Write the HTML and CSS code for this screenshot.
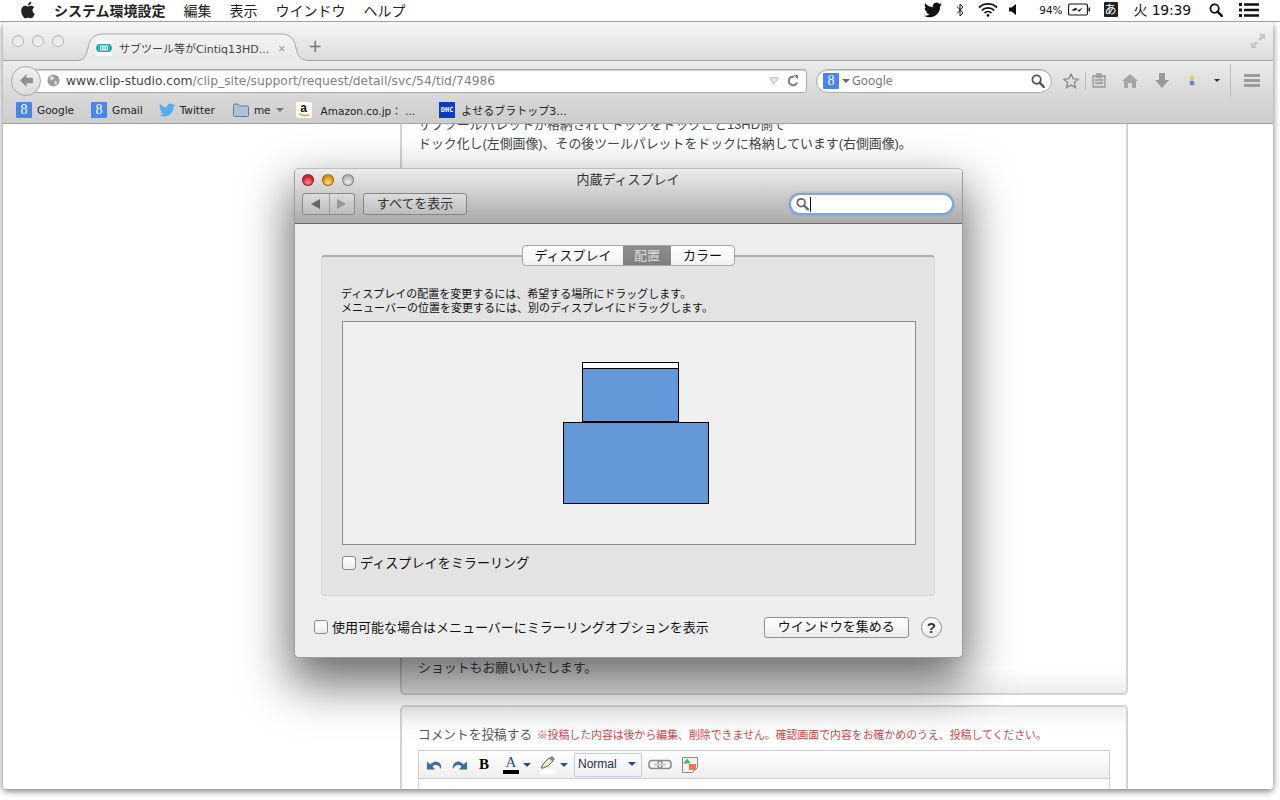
FILE: index.html
```html
<!DOCTYPE html>
<html lang="ja">
<head>
<meta charset="utf-8">
<title>システム環境設定</title>
<link rel="stylesheet" href="styles.css">
</head>
<body>
<svg class="sprite" aria-hidden="true">
  <symbol id="bird" viewBox="0 0 24 24"><path d="M23.953 4.57a10 10 0 01-2.825.775 4.958 4.958 0 002.163-2.723c-.951.555-2.005.959-3.127 1.184a4.92 4.92 0 00-8.384 4.482C7.69 8.095 4.067 6.13 1.64 3.162a4.822 4.822 0 00-.666 2.475c0 1.71.87 3.213 2.188 4.096a4.904 4.904 0 01-2.228-.616v.06a4.923 4.923 0 003.946 4.827 4.996 4.996 0 01-2.212.085 4.936 4.936 0 004.604 3.417 9.867 9.867 0 01-6.102 2.105c-.39 0-.779-.023-1.17-.067a13.995 13.995 0 007.557 2.209c9.053 0 13.998-7.496 13.998-13.985 0-.21 0-.42-.015-.63A9.935 9.935 0 0024 4.59z"/></symbol>
  <symbol id="lens" viewBox="0 0 14 14"><circle cx="5.6" cy="5.6" r="4.2" fill="none" stroke="currentColor" stroke-width="1.8"/><path d="M8.6 8.6l4.2 4.2" stroke="currentColor" stroke-width="2.4" stroke-linecap="round"/></symbol>
  <linearGradient id="tabfill" x1="0" y1="0" x2="0" y2="1"><stop offset="0" stop-color="#f4f4f4"/><stop offset="1" stop-color="#e8e8e8"/></linearGradient>
</svg>

<header class="menubar">
  <svg class="apple" viewBox="0 0 24 24"><path d="M18.71 19.5c-.83 1.24-1.71 2.45-3.05 2.47-1.34.03-1.77-.79-3.29-.79-1.53 0-2 .77-3.27.82-1.31.05-2.3-1.32-3.14-2.53C4.25 17 2.94 12.45 4.7 9.39c.87-1.52 2.43-2.48 4.12-2.51 1.28-.02 2.5.87 3.29.87.78 0 2.26-1.07 3.81-.91.65.03 2.47.26 3.64 1.98-.09.06-2.17 1.28-2.15 3.81.03 3.02 2.65 4.03 2.68 4.04-.03.07-.42 1.44-1.38 2.83M13 3.5c.73-.83 1.94-1.46 2.94-1.5.13 1.17-.34 2.35-1.04 3.19-.69.85-1.83 1.51-2.95 1.42-.15-1.15.41-2.35 1.05-3.11z"/></svg>
  <nav class="menus">
    <span class="menu-app">システム環境設定</span>
    <span>編集</span><span>表示</span><span>ウインドウ</span><span>ヘルプ</span>
  </nav>
  <div class="status">
    <svg class="st-bird"><use href="#bird"/></svg>
    <svg class="st-bt" viewBox="0 0 8 14"><path d="M1 3.5l6 6.5-3 3V1l3 3-6 6.5" fill="none" stroke="#111" stroke-width="1"/></svg>
    <svg class="st-wifi" viewBox="0 0 20 15"><path d="M1 5.5a13 13 0 0118 0M3.8 8.3a9 9 0 0112.4 0M6.6 11a5 5 0 016.8 0" fill="none" stroke="#111" stroke-width="1.8"/><circle cx="10" cy="13.4" r="1.4" fill="#111"/></svg>
    <svg class="st-vol" viewBox="0 0 7 11"><path d="M0 3.5h2.5L7 0v11L2.5 7.5H0z" fill="#111"/></svg>
    <span class="st-pct">94%</span>
    <svg class="st-bat" viewBox="0 0 22 13"><rect x=".6" y="1" width="18.8" height="11" rx="1.2" fill="none" stroke="#111" stroke-width="1.1"/><path d="M20.5 4.5h1.5v4h-1.5z" fill="#111"/><path d="M4 7l4-2.5 1.5 3L15 4.5l-4 4.5-1.5-2.6L5 8z" fill="#111"/></svg>
    <span class="st-ime">あ</span>
    <span class="st-clock">火 19:39</span>
    <svg class="st-lens"><use href="#lens"/></svg>
    <svg class="st-list" viewBox="0 0 20 14"><path d="M0 0h3v3H0zM0 5.5h3v3H0zM0 11h3v3H0zM5 .2h15v2.6H5zM5 5.7h15v2.6H5zM5 11.2h15v2.6H5z" fill="#111"/></svg>
  </div>
</header>

<main class="browser">
  <div class="tabstrip">
    <div class="lights gray-lights"><i></i><i></i><i></i></div>
    <div class="tab">
      <svg class="tab-shape" viewBox="0 0 234 28" preserveAspectRatio="none"><path d="M0 27.5C8 27.5 10 24 12 15 14 5 18 1 28 1H204C214 1 218 5 220 15 222 24 225 27.5 234 27.5V28H0z" fill="url(#tabfill)"/><path d="M0 27.5C8 27.5 10 24 12 15 14 5 18 1 28 1H204C214 1 218 5 220 15 222 24 225 27.5 234 27.5" fill="none" stroke="#a6a6a6"/></svg>
      <svg class="favicon" viewBox="0 0 16 16"><rect width="16" height="16" fill="#fff"/><rect x="0" y="4" width="16" height="8" rx="4" fill="#2aa8bf"/><rect x="4" y="5.5" width="8" height="5" fill="#e8f8fb"/><path d="M5.5 6.5v3M8 6.5v3M10.5 6.5v3" stroke="#2aa8bf" stroke-width="1"/></svg>
      <span class="tab-title">サブツール等がCintiq13HD...</span>
      <span class="tab-close">✕</span>
    </div>
    <span class="tab-new">+</span>
    <svg class="fullscreen" viewBox="0 0 14 14"><path d="M14 0v6l-2-2-3 3-2-2 3-3-2-2zM0 14V8l2 2 3-3 2 2-3 3 2 2z" fill="#c6c6c6"/></svg>
  </div>

  <div class="navbar">
    <div class="back"><svg viewBox="0 0 14 14"><path d="M1 7l6-6v3.500h6v5H7V13z" fill="#8f8f8f"/></svg></div>
    <div class="urlbar">
      <svg class="globe" viewBox="0 0 14 14"><circle cx="7" cy="7" r="6.5" fill="#9c9c9c"/><path d="M4 2l3 1 1 2-3 2-2-1zM8 7l3 1-1 4-2-1z" fill="#dcdcdc"/></svg>
      <span class="url"><b>www.clip-studio.com</b>/clip_site/support/request/detail/svc/54/tid/74986</span>
      <svg class="url-drop" viewBox="0 0 10 8"><path d="M.7.7h8.6L5 7.3z" fill="#e8e8e8" stroke="#b9b9b9"/></svg>
      <svg class="url-reload" viewBox="0 0 12 12"><path d="M10 7.5A4.2 4.2 0 116 1.8h1" fill="none" stroke="#7d7d7d" stroke-width="2"/><path d="M6.5 0L11 0v4.6z" fill="#7d7d7d"/></svg>
    </div>
    <div class="searchbar">
      <span class="g-icon">8</span>
      <i class="caret caret-dark"></i>
      <span class="search-label">Google</span>
      <svg class="search-lens"><use href="#lens"/></svg>
    </div>
    <svg class="tool star" viewBox="0 0 16 16"><path d="M8 1l2.1 4.6 5 .6-3.7 3.4 1 5L8 12.1 3.600 14.600l1-5L.9 6.200l5-.6z" fill="#dedede" stroke="#8c8c8c" stroke-width="1.3"/></svg>
    <i class="sep"></i>
    <svg class="tool clip" viewBox="0 0 14 15"><path d="M1 3h12v11H1z" fill="#d6d6d6" stroke="#979797" stroke-width="1.3"/><path d="M5 1h4v3H5zM3 7h8M3 10h8" fill="none" stroke="#979797" stroke-width="1.3"/></svg>
    <svg class="tool home" viewBox="0 0 16 14"><path d="M8 0l8 7h-2v7h-4V9H6v5H2V7H0z" fill="#a6a6a6"/></svg>
    <svg class="tool down" viewBox="0 0 14 15"><path d="M4 0h6v7h4l-7 8-7-8h4z" fill="#9a9a9a"/></svg>
    <svg class="tool dots" viewBox="0 0 6 11"><circle cx="3" cy="2.800" r="2.500" fill="#d8d470"/><circle cx="3" cy="8" r="2.500" fill="#7a80c8"/></svg>
    <i class="caret caret-small"></i>
    <i class="sep sep-tall"></i>
    <svg class="tool burger" viewBox="0 0 16 13"><path d="M0 0h16v3H0zM0 5h16v3H0zM0 10h16v3H0z" fill="#9c9c9c"/></svg>
  </div>

  <div class="bookmarks">
    <span class="bm bm-google"><span class="g-icon">8</span>Google</span>
    <span class="bm bm-gmail"><span class="g-icon">8</span>Gmail</span>
    <span class="bm bm-twitter"><svg class="bm-bird"><use href="#bird"/></svg>Twitter</span>
    <span class="bm bm-me"><svg class="folder" viewBox="0 0 16 14"><path d="M.5 2.500q0-1.500 1.500-1.500h3l1.500 2h8q1 0 1 1v8.500q0 1-1 1h-13q-1 0-1-1z" fill="#a9c3d8" stroke="#5f7f98"/></svg>me<i class="caret caret-me"></i></span>
    <span class="bm bm-amazon"><span class="amazon"><span>a</span><svg viewBox="0 0 12 4"><path d="M1 .5q5 4 10 .8" fill="none" stroke="#f09a1f" stroke-width="1.400"/></svg></span>Amazon.co.jp： ...</span>
    <span class="bm bm-dhc"><span class="dhc">DHC</span>よせるブラトップ3...</span>
  </div>

  <div class="page">
    <section class="card card-main">
      <div>
        <p>サブツールパレットが格納されてドックをドックごと13HD側で</p>
        <p>ドック化し(左側画像)、その後ツールパレットをドックに格納しています(右側画像)。</p>
      </div>
      <p>ショットもお願いいたします。</p>
    </section>
    <section class="card card-comment">
      <p class="comment-head">コメントを投稿する <span class="note">※投稿した内容は後から編集、削除できません。確認画面で内容をお確かめのうえ、投稿してください。</span></p>
      <div class="editor">
        <div class="toolbar">
          <svg class="ed-ic undo" viewBox="0 0 15 11"><path d="M3.500 5.500Q7 1 11 3t3 7q-2-4-5-4.300-2-.2-3.500 1.800L8 10.500H0V2.500z" fill="#3f6aa3"/></svg>
          <svg class="ed-ic redo" viewBox="0 0 15 11"><path d="M11.500 5.500Q8 1 4 3t-3 7q2-4 5-4.300 2-.2 3.500 1.800L7 10.500h8V2.500z" fill="#3f6aa3"/></svg>
          <b class="ed-bold">B</b>
          <span class="ed-color"><span class="ed-a">A</span><i class="bar bar-black"></i></span>
          <i class="caret caret-blue"></i>
          <span class="ed-hl"><svg viewBox="0 0 16 13"><path d="M1 12l3-5 5-5 4 3-5 5-5 2z" fill="#f7edb0" stroke="#4c5f83"/><path d="M9 2l3-2 3 3-2 2z" fill="#7e8796"/></svg><i class="bar bar-white"></i></span>
          <i class="caret caret-blue"></i>
          <span class="ed-select">Normal<i class="caret caret-blue"></i></span>
          <svg class="ed-link" viewBox="0 0 24 11"><rect x="1" y="1.500" width="13" height="8" rx="3" fill="none" stroke="#8a8a8a" stroke-width="1.500"/><rect x="10" y="1.500" width="13" height="8" rx="3" fill="none" stroke="#8a8a8a" stroke-width="1.500"/><path d="M6 5.500h12" stroke="#c9c9c9" stroke-width="2"/></svg>
          <svg class="ed-img" viewBox="0 0 16 16"><path d="M.5.500h15v10l-5 5h-10z" fill="#f3f3f3" stroke="#8a8a8a"/><path d="M5 1.500l4 5H1z" fill="#58b55a"/><rect x="7" y="7" width="7" height="6" fill="#f0794c"/></svg>
        </div>
      </div>
    </section>
  </div>
</main>

<section class="prefs">
  <div class="prefs-head">
    <div class="head-top">
      <div class="lights color-lights"><i class="l-red"></i><i class="l-yellow"></i><i class="l-gray"></i></div>
      <h1>内蔵ディスプレイ</h1>
    </div>
    <div class="head-tools">
      <div class="seg"><svg viewBox="0 0 9 10"><path d="M9 0v10L0 5z" fill="#666"/></svg><svg viewBox="0 0 9 10"><path d="M0 0v10l9-5z" fill="#999"/></svg></div>
      <button class="show-all">すべてを表示</button>
      <div class="prefs-search"><svg class="prefs-lens"><use href="#lens"/></svg><i class="text-caret"></i></div>
    </div>
  </div>
  <div class="prefs-body">
    <div class="group">
      <div class="tabs"><span>ディスプレイ</span><span class="tab-on">配置</span><span>カラー</span></div>
      <p class="desc">ディスプレイの配置を変更するには、希望する場所にドラッグします。<br>メニューバーの位置を変更するには、別のディスプレイにドラッグします。</p>
      <div class="arrange">
        <div class="disp disp-top"><i class="disp-menu"></i></div>
        <div class="disp disp-main"></div>
      </div>
      <label class="check check-mirror"><i class="box"></i>ディスプレイをミラーリング</label>
    </div>
    <div class="prefs-foot">
      <label class="check"><i class="box"></i>使用可能な場合はメニューバーにミラーリングオプションを表示</label>
      <button class="gather">ウインドウを集める</button>
      <span class="help">?</span>
    </div>
  </div>
</section>
</body>
</html>
```
FILE: styles.css
```css
* { box-sizing: border-box; }
html, body { margin: 0; height: 100%; }
body {
  position: relative;
  width: 1280px;
  height: 800px;
  overflow: hidden;
  background: #fff;
  font-family: "Noto Sans CJK JP", "Noto Sans", sans-serif;
  color: #111;
}
p, h1 { margin: 0; font-weight: normal; }
i { display: block; font-style: normal; }
.sprite { position: absolute; width: 0; height: 0; }

/* menu bar */
.menubar {
  position: relative;
  z-index: 1;
  display: flex;
  align-items: center;
  height: 22px;
  padding: 0 0 2px 18px;
  background: #fff;
  border-bottom: 1px solid #a0a0a0;
  font-size: 14px;
  line-height: 20px;
}
.apple { width: 20px; height: 20px; fill: #222; }
.menus { display: flex; gap: 18px; margin-left: 16px; color: #222; }
.menu-app { font-weight: 700; }
.status { display: flex; align-items: center; margin-left: auto; padding-right: 21px; }
.st-bird { width: 18px; height: 18px; fill: #111; }
.st-bt { width: 8px; height: 14px; margin-left: 14px; }
.st-wifi { width: 20px; height: 15px; margin-left: 14px; }
.st-vol { width: 7px; height: 11px; margin-left: 11px; }
.st-pct { margin-left: 23px; font-family: "DejaVu Sans", sans-serif; font-size: 10.5px; }
.st-bat { width: 22px; height: 13px; margin-left: 5px; }
.st-ime {
  width: 14px; height: 15px; margin-left: 14px;
  background: #222; color: #fff; border-radius: 1px;
  font-size: 12px; line-height: 14px; text-align: center;
}
.st-clock { margin-left: 16px; font-size: 14px; font-family: "DejaVu Sans", "Noto Sans CJK JP", sans-serif; letter-spacing: -.2px; }
.st-lens { width: 14px; height: 14px; margin-left: 18px; color: #111; }
.st-list { width: 20px; height: 14px; margin-left: 16px; }

/* browser window */
.browser {
  position: absolute;
  left: 3px; top: 22px;
  width: 1270px; height: 767px;
  display: flex; flex-direction: column;
  background: #fff;
  border-radius: 4px;
  overflow: hidden;
  box-shadow: 0 2px 7px rgba(0,0,0,.55);
}
.tabstrip {
  display: flex; align-items: flex-end;
  height: 39px; padding-left: 9px;
  background: linear-gradient(#f6f6f6, #dcdcdc);
  border-bottom: 1px solid #a6a6a6;
  flex: none;
}
.lights { display: flex; gap: 8px; }
.lights i { width: 12px; height: 12px; border-radius: 50%; }
.gray-lights { margin-bottom: 13px; }
.gray-lights i { border: 1px solid #b4b4b4; background: linear-gradient(#e4e4e4, #f4f4f4); }
.tab {
  position: relative;
  display: flex; align-items: center;
  width: 234px; height: 28px;
  margin: 0 0 -1px 12px;
  padding: 2px 0 0 20px;
  color: #444;
}
.tab-shape { position: absolute; left: 0; top: 0; width: 100%; height: 100%; }
.favicon { position: relative; width: 16px; height: 16px; flex: none; }
.tab-title { position: relative; margin-left: 7px; white-space: nowrap; font: 11px "DejaVu Sans", "Noto Sans CJK JP", sans-serif; }
.tab-close { position: relative; margin-left: auto; margin-right: 24px; font-size: 9px; font-weight: 700; color: #aaa; }
.tab-new { margin: 0 0 2px -2px; font: 17px/24px "DejaVu Sans", sans-serif; color: #777; }
.fullscreen { width: 14px; height: 14px; margin: 0 8px 12px auto; }

.navbar {
  display: flex; align-items: center;
  height: 36px; flex: none;
  background: linear-gradient(#ececec, #d7d7d7);
  padding: 3px 0 0 8px;
}
.back {
  position: relative; z-index: 1;
  display: flex; align-items: center; justify-content: center;
  width: 30px; height: 30px;
  border: 1px solid #a8a8a8; border-radius: 50%;
  background: linear-gradient(#f0f0f0, #dcdcdc);
}
.back svg { width: 15px; height: 15px; }
.urlbar {
  display: flex; align-items: center;
  width: 773px; height: 24px;
  margin-left: -7px; padding: 0 7px 0 12px;
  background: #fff; border: 1px solid #ababab; border-radius: 3px;
  box-shadow: inset 0 1px 1px #ccc;
}
.globe { width: 13px; height: 13px; flex: none; }
.url {
  margin-left: 6px; white-space: nowrap;
  font: 12.3px "DejaVu Sans", sans-serif; color: #808080;
}
.url b { font-weight: normal; color: #444; }
.url-drop { width: 10px; height: 8px; margin-left: auto; }
.url-reload { width: 12px; height: 12px; margin-left: 8px; }
.searchbar {
  display: flex; align-items: center;
  width: 236px; height: 24px;
  margin-left: 9px; padding: 0 6px 0 6px;
  background: #fff; border: 1px solid #ababab; border-radius: 12px;
  box-shadow: inset 0 1px 1px #ccc;
}
.g-icon {
  display: block; flex: none;
  width: 16px; height: 16px;
  background: #4a86e8; color: #fff; border-radius: 1px;
  font: 14px/16px "Liberation Serif", serif; text-align: center;
}
.caret { width: 0; height: 0; border-style: solid; border-color: #666 transparent transparent; border-width: 4px 4px 0; flex: none; }
.caret-dark { margin-left: 3px; }
.search-label { margin-left: 2px; font: 12px "Noto Sans", sans-serif; color: #777; }
.search-lens { width: 14px; height: 14px; margin-left: auto; color: #555; }
.tool { flex: none; }
.star { width: 16px; height: 16px; margin-left: 11px; }
.sep { width: 1px; height: 18px; margin-left: 6px; background: #bcbcbc; flex: none; }
.clip { width: 14px; height: 15px; margin-left: 6px; }
.home { width: 16px; height: 14px; margin-left: 16px; }
.down { width: 14px; height: 15px; margin-left: 17px; }
.dots { width: 6px; height: 11px; margin-left: 20px; }
.caret-small { margin-left: 19px; border-width: 3px 3px 0; border-top-color: #333; }
.sep-tall { height: 33px; margin-left: 10px; }
.burger { width: 16px; height: 13px; margin-left: 13px; }

.bookmarks {
  position: relative;
  display: flex; align-items: center;
  height: 27px; flex: none; padding-left: 13px;
  background: linear-gradient(#d7d7d7, #cdcdcd);
  border-bottom: 1px solid #a6a6a6;
  font: 10.5px "DejaVu Sans", "Noto Sans CJK JP", sans-serif;
  color: #222;
  white-space: nowrap;
}
.bm { display: flex; align-items: center; }
.bm .g-icon { margin-right: 5px; }
.bm-gmail { margin-left: 17px; }
.bm-twitter { margin-left: 16px; }
.bm-bird { width: 16px; height: 16px; margin-right: 5px; fill: #55acee; }
.bm-me { margin-left: 18px; }
.folder { width: 16px; height: 14px; margin-right: 5px; }
.caret-me { margin-left: 5px; border-top-color: #777; }
.bm-amazon { margin-left: 12px; }
.amazon {
  display: block; position: relative;
  width: 16px; height: 16px; margin-right: 9px;
  background: #fff; border-radius: 2px; text-align: center;
  font: 700 12px/12px "Liberation Sans", sans-serif; color: #111;
}
.amazon svg { position: absolute; left: 2px; bottom: 1px; width: 12px; height: 4px; }
.amazon span { display: block; }
.bm-dhc { margin-left: 24px; font-size: 11px; }
.dhc {
  display: block; width: 16px; height: 16px; margin-right: 6px;
  background: #0a3cc0; color: #fff; text-align: center;
  font: 700 7px/16px "DejaVu Sans Mono", monospace;
}

/* page behind */
.page {
  flex: 1; min-height: 0;
  overflow: hidden;
  padding-left: 397px;
  background: #fff;
  font: 12.9px "Liberation Sans", "Noto Sans CJK JP", sans-serif;
  color: #444;
}
.card {
  width: 728px;
  border: 2px solid #d4d4d4;
  border-radius: 5px;
  padding-left: 16px;
}
.card-main {
  display: flex; flex-direction: column; justify-content: space-between;
  height: 602px; margin-top: -31px;
  padding-top: 20px; padding-bottom: 16px;
  line-height: 19px;
  background: linear-gradient(#fff 96%, #ededed);
}
.card-comment {
  height: 120px; margin-top: 10px;
  padding-top: 18px;
  background: linear-gradient(#f0f0f0, #fff 24px);
}
.comment-head { line-height: 20px; color: #555; white-space: nowrap; font-size: 12.7px; }
.note { margin-left: 1px; font-size: 10.88px; color: #cc4a4a; }
.editor {
  width: 692px; height: 70px; margin-top: 5px;
  border: 1px solid #cfcfcf;
}
.toolbar {
  display: flex; align-items: center;
  height: 28px; padding-left: 8px;
  background: linear-gradient(#fff, #eee);
  border-bottom: 1px solid #cfcfcf;
}
.ed-ic { width: 15px; height: 11px; flex: none; }
.redo { margin-left: 10px; }
.ed-bold { margin-left: 12px; width: 10px; font: 700 15px "Liberation Serif", serif; color: #000; }
.ed-color, .ed-hl { display: flex; flex-direction: column; align-items: center; width: 16px; }
.ed-color { margin-left: 14px; }
.ed-a { font: 15px/13px "Liberation Serif", serif; color: #2a4a85; }
.bar { width: 16px; height: 4px; margin-top: 1px; }
.bar-black { background: #000; }
.bar-white { background: #fff; }
.caret-blue { border-top-color: #2a4a85; border-width: 4px 4px 0; }
.ed-color + .caret { margin-left: 4px; }
.ed-hl { margin-left: 9px; }
.ed-hl svg { width: 16px; height: 13px; }
.ed-hl + .caret { margin-left: 4px; }
.ed-select {
  display: flex; align-items: center; justify-content: space-between;
  width: 68px; height: 24px; margin-left: 6px; padding: 0 5px 2px 3px;
  border: 1px solid #bcd0e6; border-radius: 2px;
  font: 12px "Liberation Sans", sans-serif; color: #1d2f52;
}
.ed-link { width: 24px; height: 11px; margin-left: 6px; }
.ed-img { width: 16px; height: 16px; margin-left: 10px; }

/* preferences window */
.prefs {
  position: absolute;
  left: 294px; top: 168px;
  width: 669px; height: 490px;
  display: flex; flex-direction: column;
  border: 1px solid #9d9d9d; border-top-color: #bdbdbd;
  border-radius: 5px;
  overflow: hidden;
  background: #ededed;
  box-shadow: 0 22px 48px 4px rgba(0,0,0,.58);
}
.prefs-head {
  flex: none; height: 55px;
  background: linear-gradient(#ececec, #a9a9a9);
  border-bottom: 1px solid #6a6a6a;
}
.head-top { position: relative; height: 24px; }
.color-lights { position: absolute; left: 7px; top: 5px; }
.color-lights i { border: 1px solid rgba(0,0,0,.35); }
.l-red { background: radial-gradient(circle at 50% 75%, #ff8c8c, #d81f2d 65%); }
.l-yellow { background: radial-gradient(circle at 50% 75%, #ffe27a, #dc8f12 65%); }
.l-gray { background: radial-gradient(circle at 50% 75%, #efefef, #b4b4b4 70%); }
.prefs-head h1 { font-size: 13px; line-height: 19px; text-align: center; color: #333; padding-right: 1px; }
.head-tools { display: flex; align-items: center; height: 22px; padding-left: 7px; }
.seg {
  display: flex; align-items: center; justify-content: space-around;
  width: 53px; height: 22px;
  border: 1px solid #8a8a8a; border-radius: 3px;
  background-image: linear-gradient(to right, transparent 26px, #9a9a9a 26px, #9a9a9a 27px, transparent 27px), linear-gradient(#dcdcdc, #bcbcbc);
}
.seg svg { width: 9px; height: 10px; }
button { font-family: inherit; padding: 0; }
.show-all {
  width: 104px; height: 22px; margin-left: 8px; padding-bottom: 2px;
  border: 1px solid #858585; border-radius: 3px;
  background: linear-gradient(#dddddd, #bdbdbd);
  font-size: 13px; line-height: 16px; color: #333;
}
.prefs-search {
  display: flex; align-items: center;
  width: 165px; height: 22px; margin-left: auto; margin-right: 8px;
  padding-left: 5px;
  background: #fff;
  border: 2px solid #7da7d8; border-radius: 11px;
  box-shadow: 0 0 2px #6c9bd4;
}
.prefs-lens { width: 13px; height: 14px; color: #666; }
.text-caret { width: 1px; height: 15px; margin-left: 1px; background: #111; }
.prefs-body { flex: 1; position: relative; padding: 31px 27px 0 26px; }
.group {
  position: relative;
  height: 341px;
  padding: 29px 18px 0 19px;
  background: #e3e3e3;
  border: 1px solid #d6d6d6; border-top: 2px solid #acacac;
  border-radius: 4px;
}
.tabs {
  position: absolute; top: -12px; left: 200px;
  display: flex; height: 21px;
  background: linear-gradient(#fff, #f1f1f1);
  border: 1px solid #a5a5a5; border-radius: 4px;
  overflow: hidden;
  font-size: 13px; line-height: 17px; color: #111;
  white-space: nowrap;
}
.tabs span { text-align: center; }
.tabs span:nth-child(1) { width: 100px; }
.tabs span:nth-child(2) { width: 48px; }
.tabs span:nth-child(3) { width: 63px; }
.tabs .tab-on { background: linear-gradient(#8d8d8d, #7f7f7f); color: #ddd; }
.desc { font-size: 11px; line-height: 14px; color: #111; white-space: nowrap; }
.arrange {
  position: relative;
  width: 574px; height: 224px;
  margin: 7px 0 0 1px;
  background: #f0f0f0;
  border: 1px solid #8c8c8c;
}
.disp { position: absolute; background: #6398d8; border: 1px solid #000; }
.disp-top { left: 239px; top: 40px; width: 97px; height: 60px; }
.disp-menu { height: 6px; background: #fff; border-bottom: 1px solid #000; }
.disp-main { left: 220px; top: 100px; width: 146px; height: 82px; }
.check { display: flex; align-items: center; font-size: 13px; line-height: 18px; color: #111; white-space: nowrap; }
.check-mirror { margin: 9px 0 0 1px; font-size: 13.1px; }
.box {
  width: 14px; height: 14px; margin-right: 4px; flex: none;
  border: 1px solid #8a8a8a; border-radius: 3px;
  background: linear-gradient(#fff, #ececec);
}
.prefs-foot {
  display: flex; align-items: center;
  height: 22px; margin: 20px 0 0 -7px;
}
.gather {
  flex: none;
  width: 145px; height: 21px; margin-left: 55px; padding-bottom: 2px;
  border: 1px solid #8f8f8f; border-radius: 3px;
  background: linear-gradient(#fff, #ececec);
  font-size: 13px; line-height: 16px; color: #111;
}
.help {
  flex: none;
  width: 21px; height: 21px; margin-left: 12px;
  border: 1px solid #8f8f8f; border-radius: 50%;
  background: linear-gradient(#fff, #ececec);
  font: 700 15px/19px "Liberation Sans", sans-serif; text-align: center; color: #333;
}
```
